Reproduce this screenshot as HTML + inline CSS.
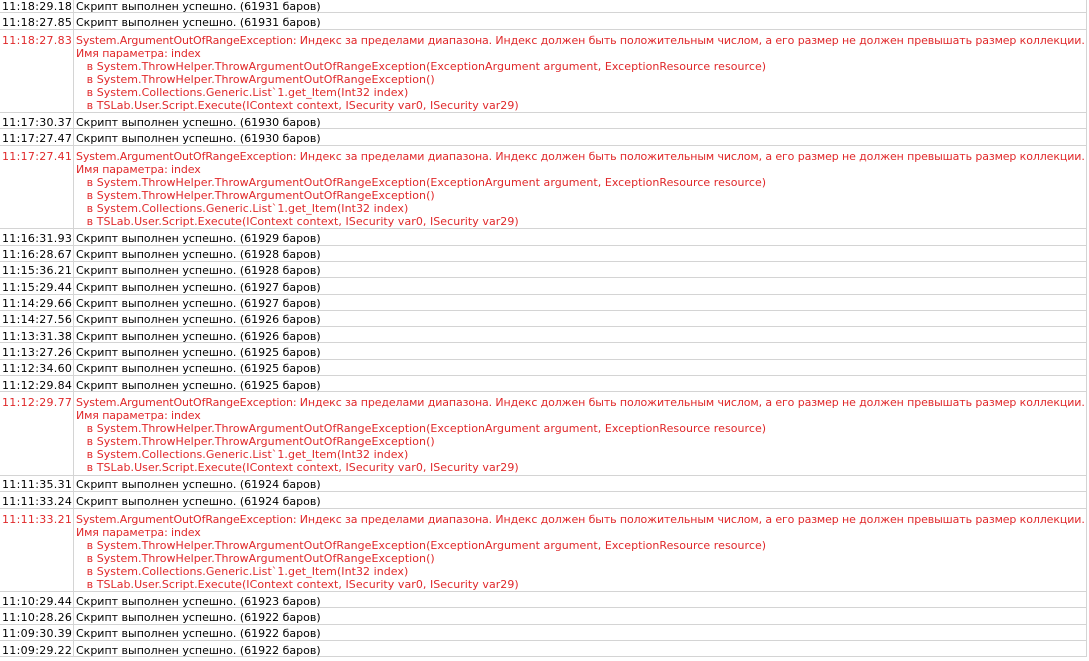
<!DOCTYPE html>
<html><head><meta charset="utf-8"><style>
html,body{margin:0;padding:0;background:#fff;width:1089px;height:661px;overflow:hidden}
body{font-family:"DejaVu Sans","Liberation Sans",sans-serif;font-size:11px;color:#000;position:relative}
.wrap{position:absolute;left:0;top:-3px;width:1086px;border-right:1px solid #d4d4d4}
.r{position:relative;border-bottom:1px solid #d4d4d4;box-sizing:border-box;height:16.3px}
.e{height:83.6px;color:#e0282a}
.t{position:absolute;left:1px;top:0;width:73px;border-right:1px solid #d4d4d4;height:100%;line-height:15.3px;padding-top:1.5px;padding-left:1px;box-sizing:border-box;letter-spacing:0.3px}
.m{position:absolute;left:76px;top:0;line-height:15.3px;padding-top:1.5px;white-space:pre;letter-spacing:0}
.e .t,.e .m{line-height:13px;padding-top:4px}
.e .m{letter-spacing:-0.11px}
.e .m s{text-decoration:none;letter-spacing:0.05px}
</style></head><body><div class="wrap">
<div class="r"><div class="t">11:18:29.18</div><div class="m">Скрипт выполнен успешно. (61931 баров)</div></div>
<div class="r"><div class="t">11:18:27.85</div><div class="m">Скрипт выполнен успешно. (61931 баров)</div></div>
<div class="r e"><div class="t">11:18:27.83</div><div class="m">System.ArgumentOutOfRangeException: Индекс за пределами диапазона. Индекс должен быть положительным числом, а его размер не должен превышать размер коллекции.
Имя параметра: index
<s>   в System.ThrowHelper.ThrowArgumentOutOfRangeException(ExceptionArgument argument, ExceptionResource resource)
   в System.ThrowHelper.ThrowArgumentOutOfRangeException()
   в System.Collections.Generic.List`1.get_Item(Int32 index)
   в TSLab.User.Script.Execute(IContext context, ISecurity var0, ISecurity var29)</s></div></div>
<div class="r"><div class="t">11:17:30.37</div><div class="m">Скрипт выполнен успешно. (61930 баров)</div></div>
<div class="r"><div class="t">11:17:27.47</div><div class="m">Скрипт выполнен успешно. (61930 баров)</div></div>
<div class="r e"><div class="t">11:17:27.41</div><div class="m">System.ArgumentOutOfRangeException: Индекс за пределами диапазона. Индекс должен быть положительным числом, а его размер не должен превышать размер коллекции.
Имя параметра: index
<s>   в System.ThrowHelper.ThrowArgumentOutOfRangeException(ExceptionArgument argument, ExceptionResource resource)
   в System.ThrowHelper.ThrowArgumentOutOfRangeException()
   в System.Collections.Generic.List`1.get_Item(Int32 index)
   в TSLab.User.Script.Execute(IContext context, ISecurity var0, ISecurity var29)</s></div></div>
<div class="r"><div class="t">11:16:31.93</div><div class="m">Скрипт выполнен успешно. (61929 баров)</div></div>
<div class="r"><div class="t">11:16:28.67</div><div class="m">Скрипт выполнен успешно. (61928 баров)</div></div>
<div class="r"><div class="t">11:15:36.21</div><div class="m">Скрипт выполнен успешно. (61928 баров)</div></div>
<div class="r"><div class="t">11:15:29.44</div><div class="m">Скрипт выполнен успешно. (61927 баров)</div></div>
<div class="r"><div class="t">11:14:29.66</div><div class="m">Скрипт выполнен успешно. (61927 баров)</div></div>
<div class="r"><div class="t">11:14:27.56</div><div class="m">Скрипт выполнен успешно. (61926 баров)</div></div>
<div class="r"><div class="t">11:13:31.38</div><div class="m">Скрипт выполнен успешно. (61926 баров)</div></div>
<div class="r"><div class="t">11:13:27.26</div><div class="m">Скрипт выполнен успешно. (61925 баров)</div></div>
<div class="r"><div class="t">11:12:34.60</div><div class="m">Скрипт выполнен успешно. (61925 баров)</div></div>
<div class="r"><div class="t">11:12:29.84</div><div class="m">Скрипт выполнен успешно. (61925 баров)</div></div>
<div class="r e"><div class="t">11:12:29.77</div><div class="m">System.ArgumentOutOfRangeException: Индекс за пределами диапазона. Индекс должен быть положительным числом, а его размер не должен превышать размер коллекции.
Имя параметра: index
<s>   в System.ThrowHelper.ThrowArgumentOutOfRangeException(ExceptionArgument argument, ExceptionResource resource)
   в System.ThrowHelper.ThrowArgumentOutOfRangeException()
   в System.Collections.Generic.List`1.get_Item(Int32 index)
   в TSLab.User.Script.Execute(IContext context, ISecurity var0, ISecurity var29)</s></div></div>
<div class="r"><div class="t">11:11:35.31</div><div class="m">Скрипт выполнен успешно. (61924 баров)</div></div>
<div class="r"><div class="t">11:11:33.24</div><div class="m">Скрипт выполнен успешно. (61924 баров)</div></div>
<div class="r e"><div class="t">11:11:33.21</div><div class="m">System.ArgumentOutOfRangeException: Индекс за пределами диапазона. Индекс должен быть положительным числом, а его размер не должен превышать размер коллекции.
Имя параметра: index
<s>   в System.ThrowHelper.ThrowArgumentOutOfRangeException(ExceptionArgument argument, ExceptionResource resource)
   в System.ThrowHelper.ThrowArgumentOutOfRangeException()
   в System.Collections.Generic.List`1.get_Item(Int32 index)
   в TSLab.User.Script.Execute(IContext context, ISecurity var0, ISecurity var29)</s></div></div>
<div class="r"><div class="t">11:10:29.44</div><div class="m">Скрипт выполнен успешно. (61923 баров)</div></div>
<div class="r"><div class="t">11:10:28.26</div><div class="m">Скрипт выполнен успешно. (61922 баров)</div></div>
<div class="r"><div class="t">11:09:30.39</div><div class="m">Скрипт выполнен успешно. (61922 баров)</div></div>
<div class="r"><div class="t">11:09:29.22</div><div class="m">Скрипт выполнен успешно. (61922 баров)</div></div>
</div></body></html>
